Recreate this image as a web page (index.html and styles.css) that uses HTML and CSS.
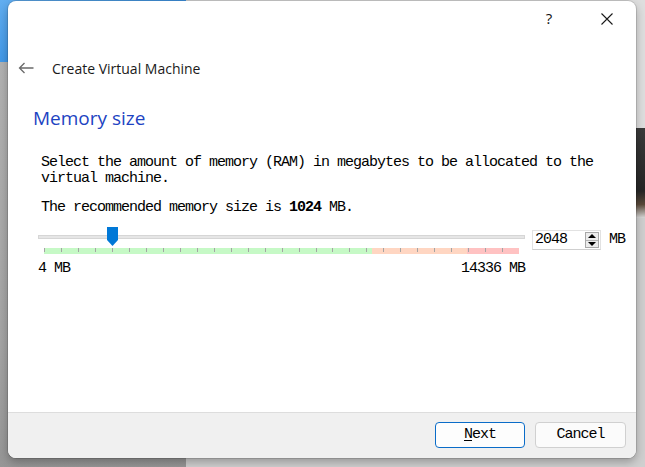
FILE: index.html
```html
<!DOCTYPE html>
<html>
<head>
<meta charset="utf-8">
<title>Create Virtual Machine</title>
<link rel="stylesheet" href="styles.css">
</head>
<body>
<div class="desktop">
  <div class="bgwin bg-blue"></div>
  <div class="bgwin bg-gray"></div>
  <div class="bgwin bg-light"></div>
  <div class="bgwin bg-photo"></div>

  <div class="dialog">
    <div class="titlebar">
      <div class="tb-btn help">?</div>
      <div class="tb-btn close">
        <svg width="12" height="12" viewBox="0 0 12 12"><path d="M0.5 0.5 L11.5 11.5 M11.5 0.5 L0.5 11.5" stroke="#1a1a1a" stroke-width="1.1" fill="none"/></svg>
      </div>
    </div>

    <div class="header">
      <svg class="back" width="16" height="12" viewBox="0 0 16 12"><path d="M15.5 6 H1.5 M6.5 1 L1.5 6 L6.5 11" stroke="#6a6a6a" stroke-width="1.3" fill="none"/></svg>
      <span class="header-title">Create Virtual Machine</span>
    </div>

    <div class="content">
      <h1 class="page-title">Memory size</h1>
      <p class="mono desc">Select the amount of memory (RAM) in megabytes to be allocated to the virtual machine.</p>
      <p class="mono desc rec">The recommended memory size is <b>1024</b> MB.</p>

      <div class="slider-row">
        <div class="slider">
          <div class="track"></div>
          <div class="ticks"></div>
          <svg class="handle" width="11" height="19" viewBox="0 0 11 19"><path d="M0 0 H11 V13 L5.5 19 L0 13 Z" fill="#0078d7"/></svg>
        </div>
        <div class="spin-group">
          <div class="spinbox">
            <span class="mono spin-value">2048</span>
            <div class="spin-arrows">
              <div class="spin-btn"><span class="tri up"></span></div>
              <div class="spin-btn"><span class="tri down"></span></div>
            </div>
          </div>
          <span class="mono unit">MB</span>
        </div>
      </div>

      <div class="mono range-labels">
        <span>4 MB</span>
        <span>14336 MB</span>
      </div>
    </div>

    <div class="footer">
      <button class="mono btn primary"><u>N</u>ext</button>
      <button class="mono btn">Cancel</button>
    </div>
  </div>
</div>
</body>
</html>
```
FILE: styles.css
```css
* { box-sizing: border-box; }

html, body {
  margin: 0;
  padding: 0;
}

body {
  background: #cdcdcd;
  overflow: hidden;
}

.desktop {
  position: relative;
  width: 645px;
  height: 467px;
  overflow: hidden;
  background: #cfcfcf;
}

.bgwin { position: absolute; }

.bg-blue {
  left: 0; top: 0;
  width: 186px; height: 62px;
  background: linear-gradient(160deg, #62aef0 0%, #3a93e6 60%, #2c86de 100%);
}

.bg-gray {
  left: 0; top: 62px;
  width: 186px; height: 405px;
  background: linear-gradient(180deg, #b2b2b2 0%, #a4a4a4 70%, #969696 100%);
}

.bg-light {
  left: 186px; top: 0;
  width: 459px; height: 130px;
  background: #dedede;
}

.bg-photo {
  left: 630px; top: 128px;
  width: 15px; height: 90px;
  background: linear-gradient(180deg, #3a3a3a, #262626 70%, #5a4a3a 85%, #d8d8d8 100%);
}

.dialog {
  position: absolute;
  left: 8px; top: 1px;
  width: 628px; height: 457px;
  background: #ffffff;
  border-radius: 8px;
  overflow: hidden;
  box-shadow: 0 0 0 1px rgba(0,0,0,0.12), 0 4px 10px rgba(0,0,0,0.28);
  display: flex;
  flex-direction: column;
}

.titlebar {
  height: 36px;
  display: flex;
  justify-content: flex-end;
  flex: none;
}

.tb-btn {
  width: 58px;
  height: 36px;
  display: flex;
  align-items: center;
  justify-content: center;
  color: #1a1a1a;
}

.help {
  font-family: "Open Sans", sans-serif;
  font-size: 15px;
  font-weight: 400;
  color: #111;
  padding-bottom: 2px;
}

.header {
  height: 62px;
  flex: none;
  display: flex;
  align-items: center;
  padding-left: 10px;
}

.back { flex: none; }

.header-title {
  margin-left: 18px;
  font-family: "Open Sans", sans-serif;
  font-size: 14px;
  color: #1a1a1a;
}

.content {
  padding-left: 25px;
  padding-right: 10px;
  flex: none;
}

.page-title {
  margin: 6px 0 0 0;
  font-family: "Open Sans", sans-serif;
  font-weight: 400;
  font-size: 19px;
  line-height: 26px;
  color: #1d43c2;
}

.mono {
  font-family: "Liberation Mono", monospace;
  font-size: 15px;
  letter-spacing: -1px;
  color: #000;
}

.desc {
  margin: 24px 0 0 8px;
  line-height: 16px;
  width: 580px;
}

.desc.rec { margin-top: 13px; }

.slider-row {
  margin: 11px 0 0 5px;
  display: flex;
  align-items: flex-start;
}

.slider {
  position: relative;
  width: 487px;
  height: 28px;
  flex: none;
}

.track {
  margin-top: 8px;
  height: 4px;
  background: #e6e6e6;
  border: 1px solid #d6d6d6;
}

.ticks {
  margin: 9px 0 0 6px;
  width: 475px;
  height: 6px;
  background:
    repeating-linear-gradient(90deg, #a4a4a4 0 1px, transparent 1px 16.97px) top left / 100% 4px no-repeat,
    linear-gradient(90deg, #c6f9c6 0 328px, #ffd6c2 328px 423px, #ffc2c2 423px 475px);
}

.handle {
  position: absolute;
  left: 69px;
  top: 0;
}

.spin-group {
  margin-left: 7px;
  margin-top: 3px;
  display: flex;
  align-items: center;
}

.spinbox {
  width: 69px;
  height: 20px;
  border: 1px solid #e2e2e2;
  border-bottom-color: #cfcfcf;
  display: flex;
  align-items: center;
  justify-content: space-between;
  padding: 0 1px 0 2px;
  background: #fff;
}

.spin-value { line-height: 18px; }

.spin-arrows {
  width: 14px;
  height: 16px;
  border: 1px solid #a8a8a8;
  background: #ececec;
  display: flex;
  flex-direction: column;
}

.spin-btn {
  flex: 1;
  display: flex;
  align-items: center;
  justify-content: center;
}

.spin-btn + .spin-btn { border-top: 1px solid #b4b4b4; }

.tri {
  width: 0; height: 0;
  border-left: 4px solid transparent;
  border-right: 4px solid transparent;
}

.tri.up { border-bottom: 4px solid #000; }
.tri.down { border-top: 4px solid #000; }

.unit {
  margin-left: 8px;
  line-height: 16px;
}

.range-labels {
  margin: 6px 0 0 5px;
  width: 487px;
  display: flex;
  justify-content: space-between;
  line-height: 16px;
}

.footer {
  margin-top: auto;
  height: 46px;
  flex: none;
  background: #f0f0f0;
  border-top: 1px solid #dddddd;
  display: flex;
  justify-content: flex-end;
  align-items: flex-start;
  gap: 10px;
  padding: 9px 10px 0 0;
}

.btn {
  height: 26px;
  width: 91px;
  border: 1px solid #d0d0d0;
  border-radius: 4px;
  background: #fbfbfb;
  padding: 0;
  line-height: 24px;
  cursor: default;
}

.btn.primary {
  width: 90px;
  border-color: #0a6cc8;
  background: #fdfdfd;
}

.btn u { text-underline-offset: 2px; }
```
